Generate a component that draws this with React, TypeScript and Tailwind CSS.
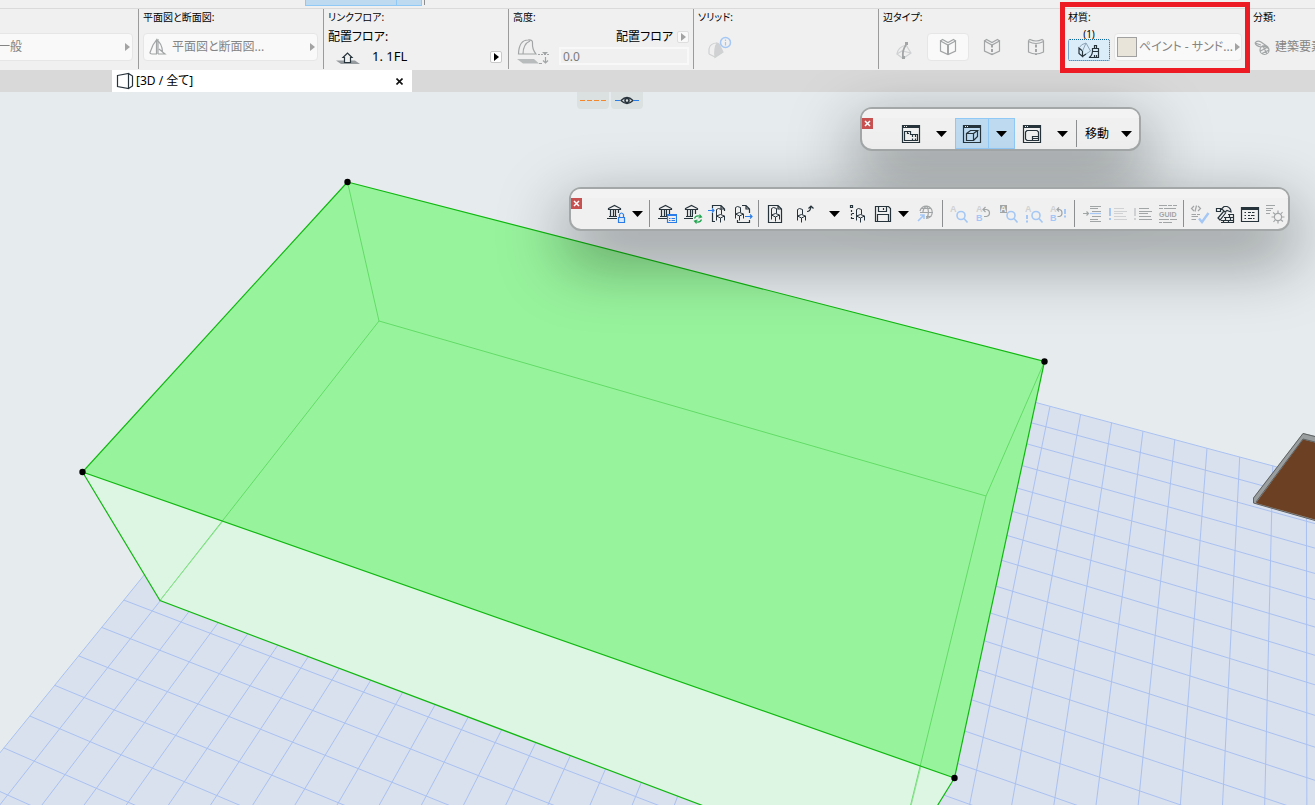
import { ReactNode } from "react";
import clsx from "clsx";

const INK = "#27333b";
const BLUE = "#2b7de9";
const GREY = "#a2a5a6";
const PALE = "#cfd1d2";
const SKY = "#a4c7f5";

type IconProps = { children: ReactNode; color?: string; width?: number; height?: number };

function Icon({ children, color = INK, width = 20, height = 20 }: IconProps) {
  return (
    <svg
      width={width}
      height={height}
      viewBox={`0 0 ${width} ${height}`}
      fill="none"
      stroke={color}
      strokeWidth={1.2}
      className="shrink-0"
      aria-hidden="true"
    >
      {children}
    </svg>
  );
}

function Triangle({ className }: { className?: string }) {
  return (
    <svg width="5" height="8" viewBox="0 0 5 8" className={clsx("shrink-0", className)} aria-hidden="true">
      <path d="M0 0L5 4L0 8Z" fill="currentColor" />
    </svg>
  );
}

/* ---------- palette icons ---------- */

const Bank = () => (
  <path d="M2.5 4.5L8.5 1.5L14.5 4.5V5.5H2.5ZM4.5 6V12.5M7.5 6V12.5M9.5 6V12.5M12.5 6V12.5M3 12.5H14M1 14.5H16" />
);

const Chair = () => (
  <path
    d="M1.5 8V1.5L3.5 0.5L6.5 1.5V6.5M1.5 8L5.5 6.5L9.5 8L5.5 10ZM1.5 8V12.5M5.5 10V14.5M9.5 8V12.5"
    strokeWidth={1}
  />
);

const BankLock = () => (
  <Icon>
    <Bank />
    <path d="M11 9H19V20H11Z" fill="#f0f0f0" stroke="none" />
    <path d="M12.5 13.5H18.5V18.5H12.5Z" fill="#dbe8fa" stroke={BLUE} />
    <path d="M13.5 13.5V10.5Q15.5 7.5 17.5 10.5V13.5" stroke={BLUE} />
  </Icon>
);

const BankList = () => (
  <Icon>
    <Bank />
    <path d="M10.5 10.5H19.5V18.5H10.5Z" fill="#f0f0f0" stroke={BLUE} />
    <path d="M10.5 11.5H19.5M12 14.5H13.5M14.5 14.5H18M12 16.5H13.5M14.5 16.5H18" stroke={BLUE} />
  </Icon>
);

const BankSync = () => (
  <Icon>
    <Bank />
    <path d="M10 10H20V20H10Z" fill="#f0f0f0" stroke="none" />
    <path
      d="M11.5 14.5Q12.5 11.5 16 12L18 13M16.5 10.5L18.5 13L15.5 14M18.5 15.5Q17.5 18.5 14 18L12 17M13.5 19.5L11.5 17L14.5 16"
      stroke="#1fa54f"
    />
  </Icon>
);

const ObjectIn = () => (
  <Icon>
    <path d="M4.5 4V1.5H13L16.5 5V7M4.5 9V17.5H7M13 1.5V5H16.5" />
    <path d="M0 6.5H6M4 4.5L6 6.5L4 8.5" stroke={BLUE} />
    <g transform="translate(7 4)">
      <Chair />
    </g>
  </Icon>
);

const ObjectOut = () => (
  <Icon>
    <path d="M9 1.5H13L16.5 5V9M13 1.5V5H16.5M4.5 16V18.5H16.5V16" />
    <path d="M12 12.5H19M17 10.5L19 12.5L17 14.5" stroke={BLUE} />
    <g transform="translate(1 2)">
      <Chair />
    </g>
  </Icon>
);

const ObjectPage = () => (
  <Icon>
    <path d="M3.5 1.5H13L16.5 5V18.5H3.5ZM13 1.5V5H16.5" />
    <g transform="translate(5 3)">
      <Chair />
    </g>
  </Icon>
);

const ObjectMove = () => (
  <Icon>
    <g transform="translate(1 4)">
      <Chair />
    </g>
    <path d="M12 7.5Q15.5 7.5 16 2.5M13.5 4.5L16 2L18.5 4.5" />
  </Icon>
);

const ObjectTree = () => (
  <Icon>
    <path d="M2.5 1.5H4.5V3.5H2.5Z" />
    <path d="M3.5 6V16" strokeDasharray="2 1.5" />
    <path d="M4 9.5H6M4 14.5H6" />
    <g transform="translate(7 4)">
      <Chair />
    </g>
  </Icon>
);

const Floppy = () => (
  <Icon>
    <path d="M2.5 2.5H15.5L17.5 4.5V17.5H2.5ZM5.5 2.5V7.5H13.5V2.5M10.5 4V6M4.5 17.5V10.5H15.5V17.5" />
  </Icon>
);

const GlobeLink = () => (
  <Icon color={GREY}>
    <path d="M5 7A6.2 6.2 0 1 1 11 14.5M6 4.5H16.5M5 8.5H18M11 12.5H16.5M11.5 2Q7.5 5 8 9M11.5 2Q15.5 8 11.5 14.5" />
    <path d="M3 17L9 11M5 11H9V15" stroke={SKY} strokeWidth={1.6} />
  </Icon>
);

const Lens = () => (
  <path d="M16 11.5A4 4 0 1 1 8 11.5A4 4 0 1 1 16 11.5ZM15 14.5L18.5 18.5" stroke={SKY} strokeWidth={1.6} />
);

const Letter = ({ x, y, color, children }: { x: number; y: number; color: string; children: string }) => (
  <text x={x} y={y} fill={color} stroke="none" fontSize="9" fontWeight="bold" fontFamily="Liberation Sans, sans-serif">
    {children}
  </text>
);

const FindA = () => (
  <Icon color={GREY}>
    <Letter x={1} y={8} color={PALE}>A</Letter>
    <Lens />
  </Icon>
);

const ReplaceAB = () => (
  <Icon color={GREY}>
    <Letter x={2} y={8} color={PALE}>A</Letter>
    <Letter x={2} y={17} color={SKY}>B</Letter>
    <path d="M9 5.5H12.5Q15.5 6 15.5 9Q15.5 12 12.5 12.5H10M11.5 3L9 5.5L11.5 8" />
  </Icon>
);

const FindBoxedA = () => (
  <Icon color={GREY}>
    <path d="M1 1H8V9H1Z" fill={GREY} stroke="none" />
    <Letter x={1} y={8} color="#f0f0f0">A</Letter>
    <Lens />
  </Icon>
);

const FindAlert = () => (
  <Icon color={GREY}>
    <Letter x={1} y={8} color={PALE}>A</Letter>
    <path d="M3 11V15M3 16.5V18.5" stroke={SKY} strokeWidth={2} />
    <Lens />
  </Icon>
);

const ReplaceAlert = () => (
  <Icon color={GREY}>
    <Letter x={1} y={8} color={PALE}>A</Letter>
    <Letter x={1} y={17} color={SKY}>B</Letter>
    <path d="M8 5.5H10.5Q13 6 13 9Q13 12 10.5 12.5H8.5M10 3.5L8 5.5L10 7.5" />
    <path d="M16 5V10M16 11.5V13.5" stroke={SKY} strokeWidth={2} />
  </Icon>
);

const IndentLines = () => (
  <Icon color={GREY}>
    <path d="M8 2.5H19M8 4.5H16M10 7.5H19M10 12.5H19M8 15.5H16M8 17.5H19M1 9.5H6.5M4.5 7.5L6.5 9.5L4.5 11.5" />
    <path d="M8 9.5H19" stroke={SKY} />
  </Icon>
);

const AlertLines = ({ pale = false }: { pale?: boolean }) => (
  <Icon color={pale ? PALE : GREY}>
    <path d="M2 4V12M2 14V16" stroke={pale ? SKY : PALE} strokeWidth={2} />
    <path d="M6 4.5H16M6 7.5H19M6 9.5H15M6 12.5H18M6 15.5H19" />
  </Icon>
);

const Guid = () => (
  <Icon color={GREY}>
    <path d="M1 1.5H9M10 1.5H14M15 1.5H19M1 4.5H5M6 4.5H18M1 15.5H11M12 15.5H19M1 18.5H4M5 18.5H14" />
    <text x="1" y="13" fill={GREY} stroke="none" fontSize="7" fontWeight="bold" fontFamily="Liberation Sans, sans-serif">
      GUID
    </text>
  </Icon>
);

const CodeCheck = () => (
  <Icon color={GREY}>
    <path d="M4 2L1.5 4.5L4 7M6.5 1.5L5 7.5M8 2L10.5 4.5L8 7M1.5 10.5H6M7 10.5H10M1.5 12.5H8M1.5 15.5H6" />
    <path d="M9 14.5L12 18L18.5 9" stroke={SKY} strokeWidth={2.4} />
  </Icon>
);

const Hammer = () => (
  <Icon>
    <path d="M1.5 4.5H5.5V7.5H1.5ZM6 5.5L9 2.5H12Q16 4 16 8L12 6.5L10 8L7.5 5.5ZM9 7L3 14L5 16L11 8.5" />
    <path d="M13 10.5H19M9 13.5H19M6 16.5H19M6 18.5H19M14.5 10.5V13.5M18.5 10.5V18.5M10.5 13.5V16.5M15.5 13.5V16.5M8.5 16.5V18.5M13.5 16.5V18.5" />
  </Icon>
);

const ListWindow = () => (
  <Icon>
    <path d="M1.5 3.5H18.5V17.5H1.5Z" />
    <path d="M1 4.5H19" strokeWidth={3} />
    <path d="M4.5 8.5H6M8 8.5H11M12 8.5H14.5M4.5 11.5H6M8 11.5H10M11 11.5H14.5M4.5 14.5H6M8 14.5H12M13 14.5H14.5" />
  </Icon>
);

const BugLines = () => (
  <Icon color={GREY}>
    <path d="M1 1.5H10M1 4.5H8M1 6.5H6M1 9.5H5" />
    <circle cx="13" cy="13" r="3.6" />
    <path d="M13 9.5V6.5M13 16.5V19.5M9.5 13H6.5M16.5 13H19.5M10.5 10.5L8 8.5M15.5 10.5L17.5 8M10.5 15.5L8.5 18M15.5 15.5L18 17.5" />
  </Icon>
);

const WindowFrame = () => (
  <>
    <path d="M1.5 1.5H18.5V18.5H1.5Z" />
    <path d="M1 2.5H19" strokeWidth={3} />
    <path d="M3 2.5H4M5 2.5H6" stroke="#f0f0f0" />
  </>
);

const PlanWindow = () => (
  <Icon>
    <WindowFrame />
    <path d="M3.5 7.5H9.5V10.5H16.5V16.5H3.5ZM6.5 7.5V9.5H8M11.5 10.5V13M14.5 10.5V13M11.5 14.5V16.5M14.5 14.5V16.5" />
  </Icon>
);

const CubeWindow = () => (
  <Icon>
    <WindowFrame />
    <path d="M4.5 9.5H11.5V16.5H4.5ZM4.5 9.5L8.5 6.5H15.5L11.5 9.5M15.5 6.5V12.5L11.5 16.5" />
  </Icon>
);

const LayoutWindow = () => (
  <Icon>
    <WindowFrame />
    <path d="M5 6.5H15L16.5 8V16.5H5L3.5 15V8ZM10.5 16.5V12.5H16.5M10.5 14.5H16.5" />
  </Icon>
);

/* ---------- floating palettes ---------- */

function ToolButton({ label, disabled, active, className = "w-[25px]", children }: {
  label: string;
  disabled?: boolean;
  active?: boolean;
  className?: string;
  children: ReactNode;
}) {
  return (
    <button
      type="button"
      aria-label={label}
      disabled={disabled}
      className={clsx(
        "flex shrink-0 items-center justify-center",
        active && "border border-[#90c8f6] bg-[#bedaf1]",
        className
      )}
    >
      {children}
    </button>
  );
}

function DropArrow() {
  return (
    <svg width="11" height="6" viewBox="0 0 11 6" className="shrink-0" aria-hidden="true">
      <path d="M0 0H11L5.5 6Z" fill="#000" />
    </svg>
  );
}

function Divider() {
  return <span className="mx-[3px] my-0.5 w-px shrink-0 bg-[#8c8f8f]" />;
}

function Palette({ label, className, children }: { label: string; className: string; children: ReactNode }) {
  return (
    <section
      aria-label={label}
      className={clsx(
        "absolute rounded-xl border-2 border-[#a3a7a7] bg-[#f0f0f0] shadow-[0_24px_64px_8px_rgba(0,0,0,0.36)]",
        className
      )}
    >
      <div className="h-[9px] rounded-t-xl bg-[#f3f3f3]" />
      <div className="flex h-[31px] pr-px">
        <button
          type="button"
          aria-label="閉じる"
          className="mr-[21px] flex size-[11px] shrink-0 items-center justify-center bg-[#c75050]"
        >
          <svg width="7" height="7" viewBox="0 0 7 7" aria-hidden="true">
            <path d="M1 1L6 6M6 1L1 6" stroke="#fff" strokeWidth="1.5" />
          </svg>
        </button>
        {children}
      </div>
    </section>
  );
}

function ViewPalette() {
  return (
    <Palette label="ウィンドウ" className="left-[860px] top-[15px]">
      <ToolButton label="平面図" className="w-[34px]"><PlanWindow /></ToolButton>
      <ToolButton label="平面図メニュー" className="w-[27px]"><DropArrow /></ToolButton>
      <ToolButton label="3D" active className="w-[34px]"><CubeWindow /></ToolButton>
      <ToolButton label="3Dメニュー" active className="-ml-px w-[27px]"><DropArrow /></ToolButton>
      <ToolButton label="レイアウト" className="w-[34px]"><LayoutWindow /></ToolButton>
      <ToolButton label="レイアウトメニュー" className="w-[27px]"><DropArrow /></ToolButton>
      <span className="my-0.5 w-px shrink-0 bg-[#8c8f8f]" />
      <button type="button" className="flex items-center gap-3 pl-2 pr-1.5 text-xs whitespace-nowrap">
        移動
        <DropArrow />
      </button>
    </Palette>
  );
}

function LibraryPalette() {
  return (
    <Palette label="ライブラリ" className="left-[569px] top-[95px]">
      <ToolButton label="ライブラリ予約"><BankLock /></ToolButton>
      <ToolButton label="予約メニュー" className="w-[18px]"><DropArrow /></ToolButton>
      <Divider />
      <ToolButton label="ライブラリマネージャー" className="w-[27px]"><BankList /></ToolButton>
      <ToolButton label="再ロード"><BankSync /></ToolButton>
      <ToolButton label="読み込み"><ObjectIn /></ToolButton>
      <ToolButton label="書き出し"><ObjectOut /></ToolButton>
      <Divider />
      <ToolButton label="新規オブジェクト"><ObjectPage /></ToolButton>
      <ToolButton label="オブジェクトを開く" className="w-9"><ObjectMove /></ToolButton>
      <ToolButton label="開くメニュー" className="w-[22px]"><DropArrow /></ToolButton>
      <ToolButton label="サブタイプ"><ObjectTree /></ToolButton>
      <ToolButton label="保存"><Floppy /></ToolButton>
      <ToolButton label="保存メニュー" className="w-4"><DropArrow /></ToolButton>
      <ToolButton label="リンク" disabled className="w-7"><GlobeLink /></ToolButton>
      <Divider />
      <ToolButton label="検索" disabled><FindA /></ToolButton>
      <ToolButton label="置換" disabled><ReplaceAB /></ToolButton>
      <ToolButton label="選択を検索" disabled><FindBoxedA /></ToolButton>
      <ToolButton label="次を検索" disabled><FindAlert /></ToolButton>
      <ToolButton label="置換して検索" disabled><ReplaceAlert /></ToolButton>
      <Divider />
      <ToolButton label="行へ移動" disabled className="w-[27px]"><IndentLines /></ToolButton>
      <ToolButton label="コメント" disabled><AlertLines pale /></ToolButton>
      <ToolButton label="コメント解除" disabled><AlertLines /></ToolButton>
      <ToolButton label="GUID" disabled><Guid /></ToolButton>
      <Divider />
      <ToolButton label="スクリプト確認" disabled><CodeCheck /></ToolButton>
      <ToolButton label="ツール"><Hammer /></ToolButton>
      <ToolButton label="一覧"><ListWindow /></ToolButton>
      <ToolButton label="デバッグ" disabled><BugLines /></ToolButton>
    </Palette>
  );
}

/* ---------- info box ---------- */

function Section({ title, className = "w-[185px] border-l", children }: {
  title?: string;
  className?: string;
  children?: ReactNode;
}) {
  return (
    <section className={clsx("relative mb-px h-[60px] shrink-0 border-[#9b9b9b] pl-1 pr-1", className)}>
      <h2 className="h-4 text-[10px] leading-4 whitespace-nowrap">{title}</h2>
      {children}
    </section>
  );
}

function PopupButton({ className, children }: { className?: string; children: ReactNode }) {
  return (
    <button
      type="button"
      className={clsx(
        "flex h-7 items-center rounded border border-[#e6e6e6] bg-[#f9f9f9] text-xs whitespace-nowrap text-[#848484]",
        className
      )}
    >
      {children}
      <Triangle className="ml-auto text-[#a3a3a3]" />
    </button>
  );
}

function EdgeIcon({ kind }: { kind: "hard" | "hidden" | "smooth" }) {
  return (
    <Icon color={GREY}>
      {kind === "smooth" ? (
        <path d="M2.5 4.5Q10 8.5 17.5 4.5M2.5 3.5V15Q10 19 17.5 15V3.5M2.5 3.5L4 2.5Q10 5.5 16 2.5L17.5 3.5" />
      ) : (
        <path d="M2.5 4V14L10 17.5L17.5 14V4L10 8ZM2.5 4L4.5 2.5L10 5.5L15.5 2.5L17.5 4" />
      )}
      <path d="M10 7.5V18" strokeWidth={2} strokeDasharray={kind === "hard" ? undefined : "3 1.5"} />
    </Icon>
  );
}

function InfoBox() {
  return (
    <header className="relative z-10 bg-[#f0f0f0]">
      <div className="flex h-[9px] items-start border-b border-[#dadada] pl-[305px]">
        <span className="h-1.5 w-[92px] border border-t-0 border-[#90c8f6] bg-[#bedaf1]" />
        <span className="mr-0.5 h-1.5 w-[25px] border border-t-0 border-l-0 border-[#90c8f6] bg-[#bedaf1]" />
        <span className="h-[5px] w-px bg-[#8c8f8f]" />
      </div>
      <div className="flex">
        <Section className="w-[138px]">
          <PopupButton className="-ml-2 mt-2 w-[137px] pl-px pr-0.5">一般</PopupButton>
        </Section>

        <Section title="平面図と断面図:">
          <PopupButton className="mt-2 w-[175px] gap-1 pl-1 pr-0.5">
            <Icon color={GREY}>
              <path d="M2 15.5L5 8L8.5 3V17H4Q2 17 2 15.5ZM10 2V17M8.5 3Q14 6 14.5 15L11 12M14.5 15L17 17H10" />
            </Icon>
            平面図と断面図...
          </PopupButton>
        </Section>

        <Section title="リンクフロア:">
          <div className="mt-1 text-xs leading-4 whitespace-nowrap">配置フロア:</div>
          <div className="mt-0.5 flex h-5 items-center pl-2 pr-0.5 text-[13px]">
            <Icon width={24} height={16}>
              <path d="M0 11.5H19L24 15H5Z" fill="#949a9d" stroke="none" />
              <path d="M8.5 13.5V8.5H7L11.5 4L16 8.5H14.5V13.5Z" fill="#f0f0f0" />
            </Icon>
            <span className="ml-3 whitespace-nowrap">1. 1FL</span>
            <button
              type="button"
              aria-label="フロア選択"
              className="ml-auto flex size-3 items-center justify-center rounded-xs border border-[#c9c9c9] bg-white"
            >
              <Triangle />
            </button>
          </div>
        </Section>

        <Section title="高度:">
          <div className="mt-1 flex">
            <div className="w-[46px] shrink-0 pl-1 pt-2">
              <Icon color={GREY} width={34} height={28}>
                <path d="M1.5 17Q2 3 11 3Q16 2.5 15.5 6Q15 12 19 17ZM6 17Q6 7 13 4" />
                <path d="M0 22H17L22 26.5H6Z" fill="#b9bcbd" stroke="none" />
                <path d="M21 17.5H32" strokeDasharray="2 1" />
                <path d="M25 15H31L28 18Z" fill={GREY} stroke="none" />
                <path d="M22 26.5H25M28.5 20V26M26 23.5L28.5 26L31 23.5" />
              </Icon>
            </div>
            <div className="min-w-0 flex-1">
              <div className="flex h-4 items-center justify-end gap-1 text-xs whitespace-nowrap">
                配置フロア
                <button
                  type="button"
                  aria-label="基準フロア"
                  className="flex size-3 items-center justify-center rounded-xs border border-[#dedede] bg-[#f9f9f9] text-[#a3a3a3]"
                >
                  <Triangle />
                </button>
              </div>
              <input
                type="text"
                aria-label="高度"
                defaultValue="0.0"
                className="mt-0.5 block h-[18px] w-full border-2 border-[#f8f8f8] bg-[#f0f0f0] px-0.5 text-xs text-[#7b7b7b]"
              />
            </div>
          </div>
        </Section>

        <Section title="ソリッド:">
          <button type="button" aria-label="ソリッド情報" className="ml-2 mt-2 block">
            <Icon color={PALE} width={28} height={28}>
              <path d="M3 21V16Q4 10 11 10M3 21L9 24" />
              <path d="M11 10Q8 15 9 24.5L17 19L13 11Z" fill={PALE} />
              <circle cx="19.5" cy="9.5" r="5" stroke={SKY} fill="#f0f0f0" strokeWidth={1.5} />
              <path d="M19.5 6.5V8M19.5 9V12.5" stroke={SKY} />
            </Icon>
          </button>
        </Section>

        <Section title="辺タイプ:">
          <div className="mt-2 flex gap-0.5">
            <button type="button" aria-label="辺を編集" className="flex h-7 w-[42px] items-end justify-center">
              <Icon color={PALE}>
                <path d="M3 13Q4 6 12 4L17 12L9 17.5L3 13L8 10L17 12" />
                <path d="M12 4Q8 9 9 17" stroke={GREY} strokeWidth={1.8} />
                <path d="M11 1H14V4H11ZM8 15H11V18H8Z" fill={GREY} stroke="none" />
              </Icon>
            </button>
            <button
              type="button"
              aria-label="ハード"
              aria-pressed="true"
              className="flex h-7 w-[42px] items-center justify-center rounded border border-[#e6e6e6] bg-[#f9f9f9]"
            >
              <EdgeIcon kind="hard" />
            </button>
            <button type="button" aria-label="非表示" className="flex h-7 w-[42px] items-center justify-center">
              <EdgeIcon kind="hidden" />
            </button>
            <button type="button" aria-label="スムーズ" className="flex h-7 w-[42px] items-center justify-center">
              <EdgeIcon kind="smooth" />
            </button>
          </div>
        </Section>

        <Section title="材質:">
          <div className="flex items-end gap-1">
            <div className="flex w-[42px] shrink-0 flex-col text-center">
              <span className="h-3.5 text-[10px] leading-[18px]">(1)</span>
              <button
                type="button"
                aria-label="材質上書き"
                className="flex h-[22px] items-center justify-center rounded-xs border border-dotted border-[#0f5f9e] bg-[#dcedfa]"
              >
                <Icon width={24} height={18}>
                  <path d="M2 7L5.5 10V15.5L2 12.5ZM5.5 15.5L9 13" />
                  <path d="M2 7Q4 3 9 2L13.5 10L9 13M5.5 10L9 2" stroke="#8ba4b5" strokeWidth={1} />
                  <path d="M17.5 7.5V4.5H19.5V7.5M15.5 10.5V7.5H21.5V10.5ZM15.5 10.5Q15 15 12 16.5H21.5V10.5M17.5 14V16.5M19.5 14V16.5" />
                </Icon>
              </button>
            </div>
            <PopupButton className="w-[128px] gap-0.5 pl-0.5 pr-0.5">
              <span className="size-5 shrink-0 border border-[#a0a0a0] bg-[#e9e4d9]" />
              ペイント - サンド...
            </PopupButton>
          </div>
          {/* highlight frame around the material controls */}
          <div className="pointer-events-none absolute -left-1 -top-[7px] z-10 h-[71px] w-[190px] border-[5px] border-[#ed1c24]" />
        </Section>

        <Section title="分類:" className="-z-10 min-w-0 flex-1 overflow-hidden border-l">
          <button type="button" className="mt-2 flex h-7 items-center gap-0.5 text-xs whitespace-nowrap text-[#848484]">
            <Icon color={GREY}>
              <path d="M2 6Q4 3 8 5L15 10M2 6Q3 9 8 10M16 13A4.5 4.5 0 1 1 7 13A4.5 4.5 0 1 1 16 13ZM8 10Q12 8 16 12M7.5 14L15 10M9 16.5L16 13M10 9L14 17M2 6L8 8" />
            </Icon>
            建築要素
          </button>
        </Section>
      </div>
    </header>
  );
}

/* ---------- 3D view ---------- */

// Ground grid in perspective: u runs across the plane, v comes towards the viewer.
const COLS = 40;
const ROWS = 36;
const HORIZON = -855;

function project(u: number, v: number) {
  const depth = 9.155e-4 - 5.11e-6 * u - 1.268e-5 * v;
  const dy = 1 / depth;
  return [1304.5 + (-0.8114 + 0.0254 * u) * dy, HORIZON + dy].map((n) => n.toFixed(1)).join(" ");
}

const gridLines = [
  ...Array.from({ length: COLS + 1 }, (_, u) => `M${project(u, 0)}L${project(u, ROWS)}`),
  ...Array.from({ length: ROWS + 1 }, (_, v) => `M${project(0, v)}L${project(COLS, v)}`),
].join("");

const plane = `M${project(0, 0)}L${project(COLS, 0)}L${project(COLS, ROWS)}L${project(0, ROWS)}Z`;

const handles = [
  [347.5, 182],
  [1044.5, 361.5],
  [954.5, 778],
  [82.5, 472],
];

function Scene() {
  return (
    <svg
      viewBox="0 92 1315 713"
      preserveAspectRatio="xMinYMin slice"
      className="block h-full w-full"
      role="img"
      aria-label="3D"
    >
      <path d={plane} fill="#d9e0ee" />
      <path d={gridLines} stroke="#a9c1f1" strokeWidth="1" fill="none" />

      <path d="M1303 433L1253 498V503L1315 520.5V436Z" fill="#9b9e9f" />
      <path d="M1303 433.5L1253.5 498V503L1315 520.5M1303 433.5L1315 436.5" stroke="#5f6263" fill="none" />
      <path d="M1303 439.5L1256 503L1315 519.5V442.5Z" fill="#6c4023" />
      <path d="M1303 439L1256 502M1303 439L1315 442" stroke="#5f6263" fill="none" />

      <path d="M82.5 472L160 600.5L893 877.5L954.5 778Z" fill="#ddf5e3" />
      <path d="M347.5 182L1044.5 361.5L954.5 778L82.5 472Z" fill="#98f39d" />
      <path d="M347.5 182L379 321L986 496L1044.5 361.5M379 321L160 600.5M986 496L893 877.5" stroke="#62dc66" fill="none" />
      <path d="M223 521L160 600.5M921 766L893 877.5" stroke="#94e297" fill="none" />
      <path
        d="M347.5 182L1044.5 361.5L954.5 778L82.5 472ZM82.5 472L160 600.5L893 877.5L954.5 778"
        stroke="#10b810"
        strokeWidth="1.2"
        fill="none"
      />
      {handles.map(([x, y]) => (
        <circle key={`${x}-${y}`} cx={x} cy={y} r="3.2" fill="#000" />
      ))}
    </svg>
  );
}

export default function App() {
  return (
    <div className="flex h-screen flex-col overflow-hidden bg-[#e6ecee] font-['Noto_Sans','Noto_Sans_CJK_JP',sans-serif] text-black [font-feature-settings:'palt']">
      <InfoBox />
      <nav className="flex h-[22px] shrink-0 bg-[#d9d9d9] pl-28">
        <div className="flex w-[300px] items-center bg-white pl-1 pr-2 text-xs">
          <Icon width={18} height={18}>
            <path d="M1.5 3.5L12.5 1.5V16.5L1.5 14.5ZM12.5 1.5L16.5 4V14L12.5 16.5" />
          </Icon>
          <a href="#view-3d" className="ml-0.5 whitespace-nowrap">[3D / 全て]</a>
          <button type="button" aria-label="タブを閉じる" className="ml-auto flex size-[9px] items-center justify-center">
            <svg width="7" height="7" viewBox="0 0 7 7" aria-hidden="true">
              <path d="M0.5 0.5L6.5 6.5M6.5 0.5L0.5 6.5" stroke="#111" strokeWidth="1.6" />
            </svg>
          </button>
        </div>
      </nav>
      <main id="view-3d" className="relative min-h-0 flex-1">
        <Scene />
        <div className="absolute left-[577px] top-0 flex gap-0.5">
          <button type="button" aria-label="切断面" className="flex h-[17px] w-8 items-center justify-center rounded-b bg-[#dbe0e1]">
            <svg width="26" height="1" viewBox="0 0 26 1" aria-hidden="true">
              <path d="M0 0.5H26" stroke="#f5862a" strokeDasharray="5 2" />
            </svg>
          </button>
          <button type="button" aria-label="表示" className="flex h-[17px] w-8 items-center justify-center rounded-b bg-[#dbe0e1]">
            <Icon width={24} height={9}>
              <path d="M0 4.5H5M19 4.5H24" stroke={BLUE} />
              <path d="M6 4.5Q12 -1.5 18 4.5Q12 10.5 6 4.5Z" />
              <circle cx="12" cy="4.5" r="2" strokeWidth={1.6} />
            </Icon>
          </button>
        </div>
        <ViewPalette />
        <LibraryPalette />
      </main>
    </div>
  );
}
